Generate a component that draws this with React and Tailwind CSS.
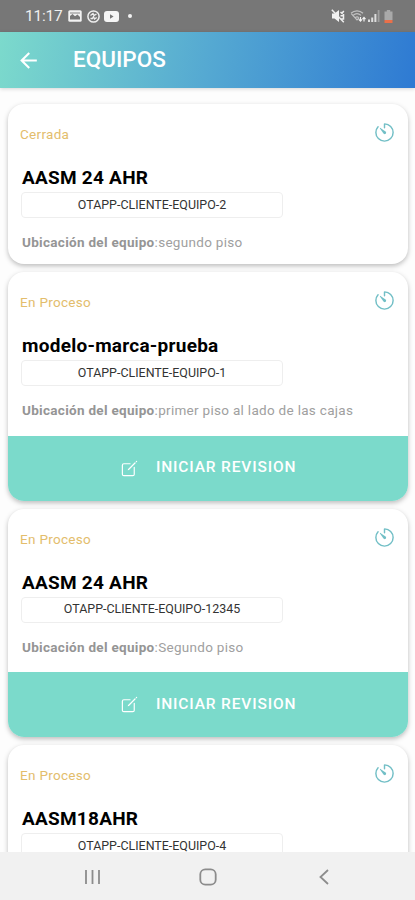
import { IoTimerOutline, IoCreateOutline } from 'react-icons/io5';
import { MdArrowBack } from 'react-icons/md';

const equipos = [
    { estado: 'Cerrada', nombre: 'AASM 24 AHR', codigo: 'OTAPP-CLIENTE-EQUIPO-2', ubicacion: 'segundo piso', abierta: false },
    { estado: 'En Proceso', nombre: 'modelo-marca-prueba', codigo: 'OTAPP-CLIENTE-EQUIPO-1', ubicacion: 'primer piso al lado de las cajas', abierta: true },
    { estado: 'En Proceso', nombre: 'AASM 24 AHR', codigo: 'OTAPP-CLIENTE-EQUIPO-12345', ubicacion: 'Segundo piso', abierta: true },
    { estado: 'En Proceso', nombre: 'AASM18AHR', codigo: 'OTAPP-CLIENTE-EQUIPO-4', abierta: false },
];

const StatusBar = () => (
    <div className="flex h-8 shrink-0 items-center justify-between bg-[#777777] pl-[25px] pr-[22px] text-[#efefef]">
        <div className="flex items-center">
            <span className="w-[43px] pt-px text-[15.5px] leading-none tracking-[-0.2px]">11:17</span>
            {/* galería */}
            <svg width="14" height="12" viewBox="0 0 14 12">
                <rect x="0.3" y="0.3" width="13.4" height="11.4" rx="1.5" fill="#f2f2f2" />
                <path d="M2 9.5V6l2.5-2L7 6.2 9.5 4.5 12 7v2.5z" fill="#777777" />
                <path d="M2 2.3h10v1.4H2z" fill="#a5a5a5" />
            </svg>
            <svg className="ml-[5px]" width="13" height="13" viewBox="0 0 13 13" fill="none" stroke="#efefef">
                <circle cx="6.5" cy="6.5" r="5.6" strokeWidth="1.5" />
                <path d="M3.5 5.5 6 3.5l1 2 2.5-1.5M3.5 8.5h2l1-2 1 2.5 2.2-1.5" strokeWidth="1.3" />
            </svg>
            <svg className="ml-[4px]" width="15" height="11" viewBox="0 0 15 11">
                <rect width="15" height="11" rx="3" fill="#f5f5f5" />
                <path d="M6 3.3v4.4l3.6-2.2z" fill="#777777" />
            </svg>
            <span className="ml-[9px] size-[4px] rounded-full bg-[#f2f2f2]" />
        </div>
        <div className="flex items-center gap-[5px]">
            {/* sonido desactivado */}
            <svg width="14" height="14" viewBox="0 0 14 14">
                <path d="M1 4.5h2.5L8 1v12L3.5 9.5H1z" fill="#f2f2f2" />
                <path d="m.8.8 12 12.4M9.5 3l1.5 1.3L12.8 2M9.5 6.8h3M9.8 10h2.7V5" fill="none" stroke="#efefef" strokeWidth="1.5" />
            </svg>
            <svg width="16" height="14" viewBox="0 0 16 14" fill="none" stroke="#c2c2c2" strokeWidth="1.2">
                <path d="M1 4.2C4.5 1 9.5 1 13 4.2M3 6.4c2.5-2.2 5.5-2.2 8 0M5.2 8.6c1.2-1 2.5-1 3.6 0M1.5 4.8 7 11l2-2" />
                <path d="M10.5 8v4m-1.7-1.6 1.7 1.8 1.5-1.8M14 12.5v-4m-1.5 1.6L14 8.4l1.5 1.7" stroke="#f2f2f2" />
            </svg>
            <svg className="-ml-[3px]" width="12" height="12" viewBox="0 0 12 12">
                <path d="M0 9.5h2V12H0zM3.2 7.5h2V12h-2zM6.4 4h2v8h-2z" fill="#dedede" />
                <path d="M9.7 0h1.8v12H9.7z" fill="#a0a0a0" />
            </svg>
            <svg className="-ml-px" width="9" height="13" viewBox="0 0 9 13">
                <path d="M2.8 0h3.4v1.5H8.5V10h-8V1.5h2.3z" fill="#a9a9a9" />
                <path d="M.5 10h8v3h-8z" fill="#e9704a" />
            </svg>
        </div>
    </div>
);

const Header = () => (
    <header className="z-10 flex h-14 shrink-0 items-center bg-[linear-gradient(100deg,#7cdacc_0%,#55a9d2_50%,#2e7ad3_100%)] pl-[16px] text-white shadow-[0_1px_4px_rgba(0,0,0,0.16)]">
        <MdArrowBack size={25} />
        <h1 className="ml-8 pb-px text-[22.5px] font-medium leading-none">EQUIPOS</h1>
    </header>
);

const EquipoCard = ({ equipo }) => (
    <article className="shrink-0 overflow-hidden rounded-[16px] bg-white shadow-[0_2px_5px_rgba(0,0,0,0.26)]">
        <div className="flex h-[160px] flex-col pl-[14px] pr-[12px] pt-[17px]">
            <div className="flex h-[26px] shrink-0 justify-between">
                <span className="-ml-[2px] mt-[5px] text-[13.5px] leading-4 tracking-[0.3px] text-[#e3bd6c]">{equipo.estado}</span>
                <IoTimerOutline size={23} className="text-[#72bfc6]" />
            </div>
            <h2 className="mt-[19px] text-[19px] font-bold leading-[24px] tracking-[0.25px] text-black">{equipo.nombre}</h2>
            <div className="-ml-px mt-[2px] flex h-[26px] w-[262px] shrink-0 items-center justify-center rounded-[4px] border border-[#eeeeee] text-[12.45px] leading-none text-[#333333]">
                {equipo.codigo}
            </div>
            {equipo.ubicacion && (
                <p className="mt-[16px] text-[13.5px] leading-4 tracking-[0.3px] text-[#a0a0a0]">
                    <b className="font-bold text-[#959595]">Ubicación del equipo</b>:{equipo.ubicacion}
                </p>
            )}
        </div>
        {equipo.abierta && (
            <button className="mt-[3.5px] flex h-[65px] w-full items-center bg-[#7bdacb] pl-[112px] text-white">
                <IoCreateOutline size={19} />
                <span className="ml-[17px] text-[15.5px] font-medium leading-none tracking-[0.85px]">INICIAR REVISION</span>
            </button>
        )}
    </article>
);

const NavBar = () => (
    <nav className="flex h-12 shrink-0 items-center bg-[#f1f1f1] pl-[84px] pt-[2px]">
        <svg width="17" height="16" viewBox="0 0 17 16" stroke="#8c8c8c" strokeWidth="1.8">
            <path d="M2 1v14M8.5 1v14M15 1v14" />
        </svg>
        <svg className="ml-[98px]" width="18" height="18" viewBox="0 0 18 18" fill="none" stroke="#8c8c8c" strokeWidth="1.8">
            <rect x="1.3" y="1.3" width="15.4" height="15.4" rx="5" />
        </svg>
        <svg className="ml-[101px]" width="12" height="16" viewBox="0 0 12 16" fill="none" stroke="#8c8c8c" strokeWidth="1.8">
            <path d="M10 1 2.5 8l7.5 7" />
        </svg>
    </nav>
);

export default function App() {
    return (
        <div className="flex h-[900px] w-[415px] flex-col overflow-hidden bg-[#fdfdfd] font-['Roboto',sans-serif]">
            <StatusBar />
            <Header />
            <main className="flex min-h-0 flex-1 flex-col gap-2 overflow-hidden pl-[8px] pr-[7px] pt-4">
                {equipos.map((equipo) => (
                    <EquipoCard key={equipo.codigo} equipo={equipo} />
                ))}
            </main>
            <NavBar />
        </div>
    );
}
